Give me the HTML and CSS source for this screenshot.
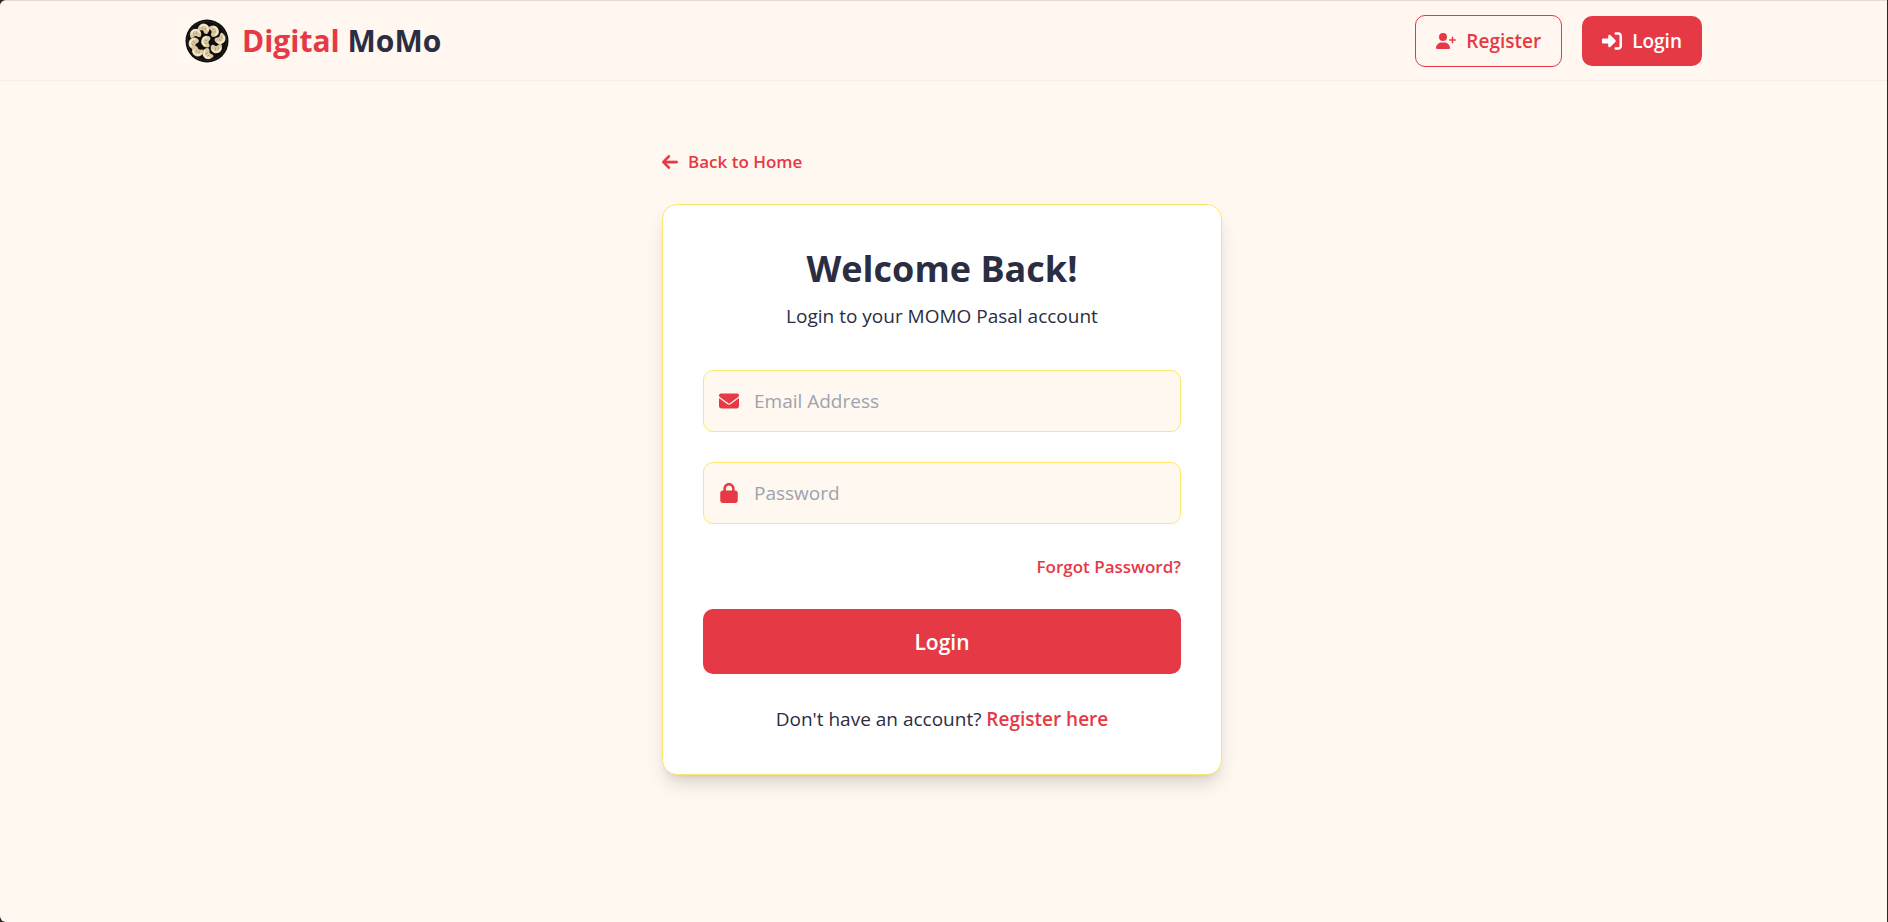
FILE: index.html
```html
<!DOCTYPE html>
<html lang="en">
<head>
<meta charset="utf-8">
<meta name="viewport" content="width=device-width, initial-scale=1">
<title>Digital MoMo - Login</title>
<link rel="stylesheet" href="styles.css">
</head>
<body>
<div class="page">
  <header class="header">
    <div class="header-inner">
      <a class="brand" href="#">
        <svg class="brand-logo" viewBox="0 0 44 44" aria-hidden="true">
          <defs>
            <g id="momo">
              <path d="M-5.500 3C-6.500-1.500-3.500-5 .5-4.800 4.500-4.600 6.500-1 5.500 2.500 5 4 3 4.500 1.500 3.200 0 2-1 2.500-2.500 3.800-4 4.800-5.200 4.500-5.500 3z" fill="#d9c7a2"/>
              <path d="M-4 .5C-3.500-2.500-1.500-3.800 1-3.400 3-3 4 -1.500 4.200 0" fill="none" stroke="#f6ebd2" stroke-width="1.600"/>
              <path d="M-1.500 1.200L-2.200-1M1 1L1.200-1.600" fill="none" stroke="#a88f66" stroke-width=".7"/>
            </g>
          </defs>
          <circle cx="22" cy="22" r="21.500" fill="#0d0c0b"/>
          <circle cx="22" cy="22" r="19.500" fill="none" stroke="#2b2b2b" stroke-width=".8"/>
          <use href="#momo" transform="translate(19 9.500) rotate(30)"/>
          <use href="#momo" transform="translate(29 12) rotate(75)"/>
          <use href="#momo" transform="translate(35.500 20) rotate(140)"/>
          <use href="#momo" transform="translate(31.500 29.500) rotate(175)"/>
          <use href="#momo" transform="translate(22.500 35) rotate(-120)"/>
          <use href="#momo" transform="translate(12.500 32.500) rotate(-150)"/>
          <use href="#momo" transform="translate(8.500 24) rotate(-60)"/>
          <use href="#momo" transform="translate(10.500 14.500) rotate(-5)"/>
          <use href="#momo" transform="translate(21 22.500) rotate(-80)"/>
        </svg>
        <span class="brand-name"><span class="accent">Digital</span> MoMo</span>
      </a>
      <nav class="nav">
        <a class="btn btn-outline" href="#">
          <svg class="icon-wide" viewBox="0 0 640 512" aria-hidden="true"><path d="M96 128a128 128 0 1 1 256 0A128 128 0 1 1 96 128zM0 482.300C0 383.800 79.800 304 178.300 304h91.400C368.200 304 448 383.800 448 482.300c0 16.400-13.300 29.700-29.700 29.700H29.700C13.300 512 0 498.700 0 482.300zM504 312V248H440c-13.300 0-24-10.700-24-24s10.700-24 24-24h64V136c0-13.300 10.700-24 24-24s24 10.700 24 24v64h64c13.300 0 24 10.700 24 24s-10.700 24-24 24H552v64c0 13.300-10.700 24-24 24s-24-10.700-24-24z"/></svg>
          Register
        </a>
        <a class="btn btn-solid" href="#">
          <svg class="icon" viewBox="0 0 512 512" aria-hidden="true"><path d="M217.900 105.900L340.700 228.700c7.200 7.200 11.300 17.100 11.300 27.300s-4.100 20.100-11.300 27.300L217.900 406.100c-6.400 6.400-15 9.900-24 9.900c-18.700 0-33.900-15.200-33.900-33.900l0-62.100L32 320c-17.700 0-32-14.300-32-32l0-64c0-17.700 14.300-32 32-32l128 0 0-62.100c0-18.700 15.200-33.900 33.900-33.900c9 0 17.600 3.600 24 9.900zM352 416l64 0c17.700 0 32-14.300 32-32l0-256c0-17.700-14.300-32-32-32l-64 0c-17.700 0-32-14.300-32-32s14.300-32 32-32l64 0c53 0 96 43 96 96l0 256c0 53-43 96-96 96l-64 0c-17.700 0-32-14.300-32-32s14.300-32 32-32z"/></svg>
          Login
        </a>
      </nav>
    </div>
  </header>

  <main class="main">
    <a class="back" href="#">
      <svg class="icon-back" viewBox="0 0 448 512" aria-hidden="true"><path stroke="currentColor" stroke-width="14" d="M9.400 233.400c-12.500 12.500-12.500 32.800 0 45.300l160 160c12.500 12.500 32.800 12.500 45.300 0s12.500-32.800 0-45.300L109.200 288 416 288c17.700 0 32-14.300 32-32s-14.300-32-32-32l-306.700 0L214.600 118.600c12.500-12.500 12.500-32.800 0-45.300s-32.800-12.500-45.300 0l-160 160z"/></svg>
      Back to Home
    </a>
    <section class="card">
      <h1 class="title">Welcome Back!</h1>
      <p class="subtitle">Login to your MOMO Pasal account</p>
      <form class="form">
        <label class="field">
          <svg class="icon" viewBox="0 0 512 512" aria-hidden="true"><path d="M48 64C21.500 64 0 85.500 0 112c0 15.100 7.100 29.300 19.200 38.400L236.800 313.600c11.400 8.500 27 8.500 38.400 0L492.800 150.400c12.100-9.100 19.200-23.300 19.200-38.400c0-26.500-21.500-48-48-48L48 64zM0 176L0 384c0 35.300 28.700 64 64 64l384 0c35.300 0 64-28.700 64-64l0-208L294.400 339.200c-22.800 17.100-54 17.100-76.800 0L0 176z"/></svg>
          <input class="input" type="email" placeholder="Email Address" aria-label="Email Address">
        </label>
        <label class="field">
          <svg class="icon" viewBox="-32 0 512 512" aria-hidden="true"><path d="M144 144l0 48 160 0 0-48c0-44.200-35.800-80-80-80s-80 35.800-80 80zM80 192l0-48C80 64.500 144.500 0 224 0s144 64.500 144 144l0 48 16 0c35.300 0 64 28.700 64 64l0 192c0 35.300-28.700 64-64 64L64 512c-35.300 0-64-28.700-64-64L0 256c0-35.300 28.700-64 64-64l16 0z"/></svg>
          <input class="input" type="password" placeholder="Password" aria-label="Password">
        </label>
        <a class="forgot" href="#">Forgot Password?</a>
        <button class="submit" type="submit">Login</button>
      </form>
      <p class="signup">Don't have an account? <a class="signup-link" href="#">Register here</a></p>
    </section>
  </main>
</div>
</body>
</html>
```
FILE: styles.css
```css
:root {
  --primary: #e63946;
  --dark: #2b2d42;
  --cream: #fff8f0;
  --yellow: #ffe66d;
}

* {
  box-sizing: border-box;
}

html {
  background: #2e2525;
}

body {
  margin: 0;
  font-family: "Segoe UI", "Open Sans", "Noto Sans", sans-serif;
  font-size: 19px;
  line-height: 30px;
  color: var(--dark);
}

a {
  color: var(--primary);
  text-decoration: none;
}

h1,
p {
  margin: 0;
}

svg {
  flex: none;
  fill: currentColor;
}

.page {
  min-height: 100vh;
  margin-right: 1px;
  border-top: 1px solid #e5dcd6;
  border-radius: 6px 0 0 6px;
  background: var(--cream);
}

.header {
  height: 80px;
  border-bottom: 1px solid #f8ece6;
  background: #fff7f0;
  border-top-left-radius: 6px;
}

.header-inner {
  display: flex;
  align-items: center;
  justify-content: space-between;
  max-width: 1557px;
  height: 100%;
  margin: 0 auto;
  padding: 0 20px;
}

.brand {
  display: flex;
  align-items: center;
  gap: 13px;
}

.brand-logo {
  width: 44px;
  height: 44px;
}

.brand-name {
  font-size: 30px;
  font-weight: 700;
  color: var(--dark);
}

.accent {
  color: var(--primary);
}

.nav {
  display: flex;
  align-items: center;
  gap: 20px;
}

.btn {
  display: flex;
  align-items: center;
  gap: 10px;
  padding: 10px 20px;
  border-radius: 10px;
  font-weight: 600;
}

.btn-outline {
  border: 1px solid var(--primary);
}

.btn-solid {
  background: var(--primary);
  color: #fff;
}

.icon {
  width: 20px;
  height: 20px;
}

.icon-wide {
  width: 20px;
  height: 16px;
}

.icon-back {
  width: 16px;
  height: 18px;
}

.main {
  max-width: 563px;
  margin: 0 auto;
  padding: 66px 3px 40px 0;
}

.back {
  display: inline-flex;
  align-items: center;
  gap: 10px;
  margin-bottom: 27px;
  font-size: 17px;
  font-weight: 600;
}

.card {
  padding: 40px;
  border: 1px solid var(--yellow);
  border-radius: 15px;
  background: #fff;
  box-shadow: 0 12px 19px -4px rgba(0, 0, 0, 0.14), 0 5px 8px -5px rgba(0, 0, 0, 0.12);
  text-align: center;
}

.title {
  margin-bottom: 8px;
  font-size: 36px;
  line-height: 48px;
  font-weight: 700;
}

.form {
  display: flex;
  flex-direction: column;
  gap: 30px;
  margin: 39px 0 30px;
}

.field {
  display: flex;
  align-items: center;
  gap: 15px;
  padding: 0 15px;
  border: 1px solid var(--yellow);
  border-radius: 10px;
  background: var(--cream);
  color: var(--primary);
}

.input {
  flex: 1;
  min-width: 0;
  height: 60px;
  padding: 0;
  border: 0;
  outline: 0;
  background: transparent;
  font: inherit;
  color: var(--dark);
}

.input::placeholder {
  color: #9ca3af;
}

.forgot {
  align-self: flex-end;
  font-size: 17px;
  line-height: 25px;
  font-weight: 600;
}

.submit {
  height: 65px;
  border: 0;
  border-radius: 10px;
  background: var(--primary);
  color: #fff;
  font: inherit;
  font-size: 21px;
  font-weight: 600;
}

.signup-link {
  font-weight: 600;
}
```
